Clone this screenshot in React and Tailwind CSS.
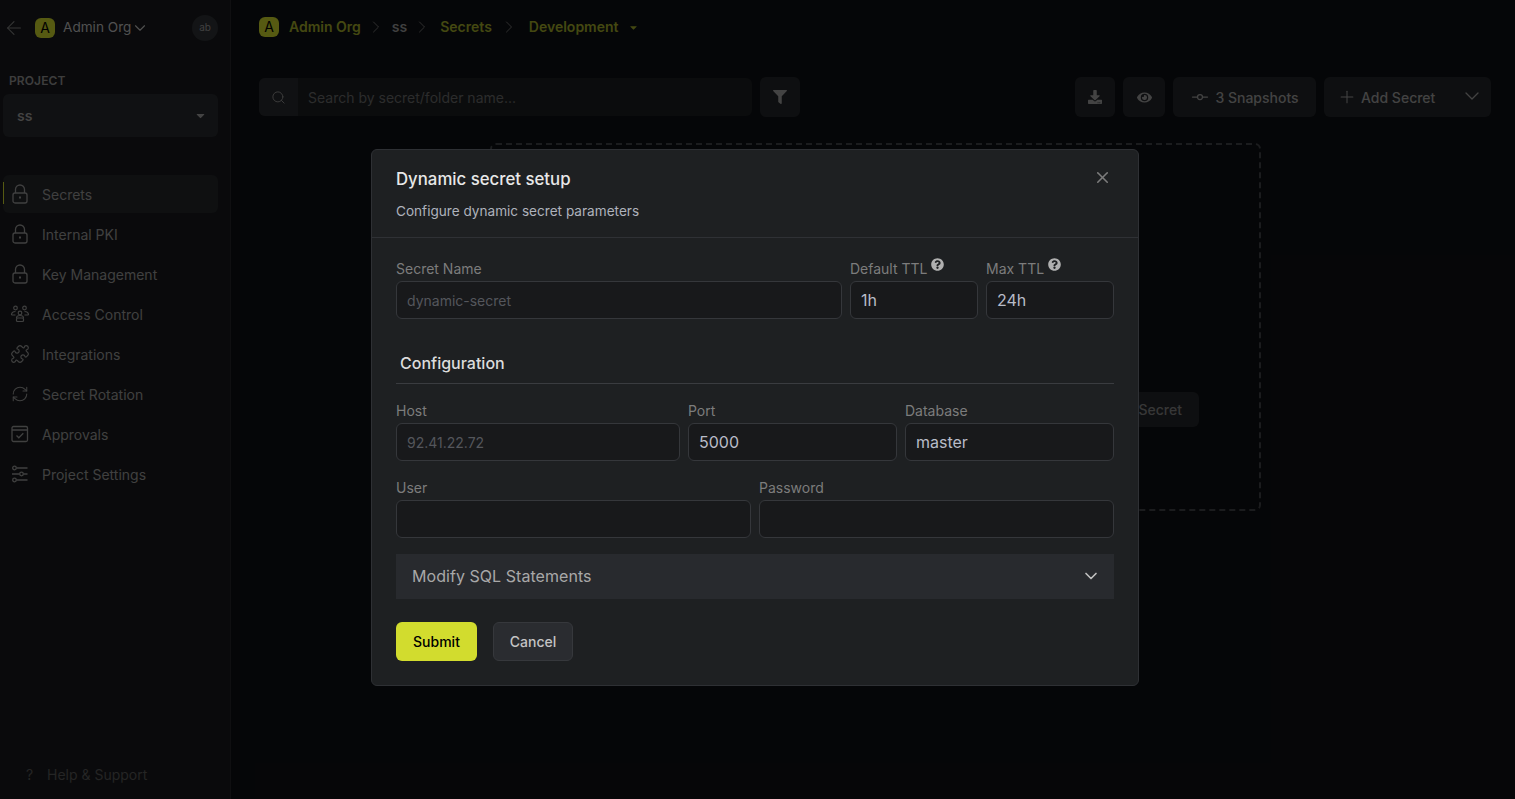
import { ArrowLeft, ChevronDown, ChevronRight, GitCommitHorizontal, Plus, Puzzle, RefreshCw, Search, X } from 'lucide-react'
import { FaCaretDown, FaDownload, FaEye, FaFilter, FaQuestionCircle } from 'react-icons/fa'

function LockIcon() {
  return (
    <svg width="16" height="20" viewBox="0 0 16 20" fill="none" stroke="currentColor" strokeWidth="1.3">
      <path d="M3.500 9V5.500a4.500 4.500 0 0 1 9 0V9" />
      <rect x="1" y="9" width="14" height="10" rx="2" />
      <path d="M8 12.500v2" strokeWidth="2" />
    </svg>
  )
}

function AccessIcon() {
  return (
    <svg width="20" height="20" viewBox="0 0 20 20" fill="none" stroke="currentColor" strokeWidth="1.2">
      <circle cx="5.500" cy="4" r="1.800" />
      <circle cx="14.500" cy="4" r="1.800" />
      <circle cx="10" cy="9" r="1.800" />
      <path d="M1.500 11c0-2.500 1.500-3.500 4-3.500M18.500 11c0-2.500-1.500-3.500-4-3.500" />
      <path d="M1.500 11h4M14.500 11h4" />
      <path d="M6.500 14c0-1.500 1.500-2.500 3.500-2.500s3.500 1 3.500 2.500" />
      <rect x="6.500" y="14" width="7" height="3.500" rx="1" />
    </svg>
  )
}

function ApprovalIcon() {
  return (
    <svg width="18" height="18" viewBox="0 0 18 18" fill="none" stroke="currentColor" strokeWidth="1.3">
      <rect x="1" y="1.500" width="15.500" height="15" rx="1.500" />
      <path d="M1 5h15.500M5.500 10.500l2.300 2.300 4.500-4.500" />
    </svg>
  )
}

function SlidersIcon() {
  return (
    <svg width="18" height="18" viewBox="0 0 18 18" fill="none" stroke="currentColor" strokeWidth="1.3">
      <circle cx="3.500" cy="3" r="1.800" />
      <circle cx="10.500" cy="9" r="1.800" />
      <circle cx="3.500" cy="15" r="1.800" />
      <path d="M5.500 3h11M1 9h7.500M12.500 9h4M5.500 15h11" />
    </svg>
  )
}

const navItems = [
  { label: 'Secrets', icon: <LockIcon />, active: true },
  { label: 'Internal PKI', icon: <LockIcon /> },
  { label: 'Key Management', icon: <LockIcon /> },
  { label: 'Access Control', icon: <AccessIcon /> },
  { label: 'Integrations', icon: <Puzzle size={20} strokeWidth={1.4} /> },
  { label: 'Secret Rotation', icon: <RefreshCw size={18} strokeWidth={1.4} /> },
  { label: 'Approvals', icon: <ApprovalIcon /> },
  { label: 'Project Settings', icon: <SlidersIcon /> },
]

function Sidebar() {
  return (
    <aside className="flex h-full w-[231px] shrink-0 flex-col border-r border-[#26272b] bg-[#1a1b1e] pl-[3px] pr-3">
      <div className="flex h-14 items-center pb-[1px]">
        <ArrowLeft size={22} strokeWidth={1.1} className="text-[#8a8a8a]" />
        <span className="ml-[10px] flex h-5 w-5 items-center justify-center rounded-md bg-[#d6e02e] text-sm text-black">A</span>
        <span className="ml-2 text-[13.6px] text-[#c8c8c8]">Admin Org</span>
        <ChevronDown size={18} strokeWidth={1.5} className="text-[#c8c8c8]" />
        <span className="ml-auto flex h-[26px] w-[26px] items-center justify-center rounded-full bg-[#313338] text-[10px] text-[#a0a0a0]">ab</span>
      </div>
      <p className="ml-[6px] mt-4 text-xs font-semibold leading-[18px] tracking-[0.1px] text-[#9a9a9a]">PROJECT</p>
      <div className="mt-1 flex h-[43px] items-center justify-between rounded-md bg-[#2a2c30] pl-[14px] pr-[11px] text-sm font-semibold text-[#a8a8a8]">
        ss
        <FaCaretDown size={13} className="text-[#a8a8a8]" />
      </div>
      <nav className="mt-[38px] flex flex-col gap-[2px]">
        {navItems.map((item) => (
          <div
            key={item.label}
            className={`relative flex h-[38px] items-center rounded-md pl-[9px] text-sm text-[#a0a0a0] ${item.active ? 'bg-[#26282c]' : ''}`}
          >
            {item.active && <span className="absolute left-0 top-[7px] h-[22px] w-px bg-[#d6e02e]" />}
            <span className="flex w-4 justify-center [&>svg]:shrink-0">{item.icon}</span>
            <span className="ml-[14px] pt-[2px]">{item.label}</span>
          </div>
        ))}
      </nav>
      <div className="mt-auto mb-[14px] flex items-center pl-[23px] text-sm text-[#5c5c5c]">
        <span className="w-[21px]">?</span>
        Help &amp; Support
      </div>
    </aside>
  )
}

function ToolButton({ className, children }) {
  return (
    <div className={`flex h-10 items-center justify-center rounded-md bg-[#25272b] text-sm font-medium text-[#a8a8a8] ${className}`}>
      {children}
    </div>
  )
}

function Main() {
  return (
    <main className="min-w-0 flex-1 pl-7 pr-6">
      <div className="flex h-[54px] items-center text-sm font-semibold">
        <span className="flex h-5 w-5 items-center justify-center rounded-md bg-[#d6e02e] font-normal text-black">A</span>
        <span className="ml-[10px] text-[#aab52c]">Admin Org</span>
        <ChevronRight size={20} strokeWidth={1} className="ml-[5px] text-[#8a8a8a]" />
        <span className="ml-[6px] text-[#a0a0a0]">ss</span>
        <ChevronRight size={20} strokeWidth={1} className="ml-[5px] text-[#8a8a8a]" />
        <span className="ml-2 text-[#aab52c]">Secrets</span>
        <ChevronRight size={20} strokeWidth={1} className="ml-[7px] text-[#8a8a8a]" />
        <span className="ml-[10px] text-[#aab52c]">Development</span>
        <FaCaretDown size={11} className="ml-[9px] text-[#aab52c]" />
      </div>
      <div className="mt-[23px] flex items-center">
        <div className="flex h-[38px] w-[493px] overflow-hidden rounded-md bg-[#1d1f22] text-sm text-[#6e6e6e]">
          <span className="flex w-[39px] items-center justify-center bg-[#2a2c30]">
            <Search size={15} strokeWidth={1.5} className="text-[#9a9a9a]" />
          </span>
          <span className="flex items-center pl-[10px] pt-[2px]">Search by secret/folder name...</span>
        </div>
        <ToolButton className="ml-2 w-10">
          <FaFilter size={14} />
        </ToolButton>
        <div className="ml-auto flex gap-2">
          <ToolButton className="w-10">
            <FaDownload size={14} />
          </ToolButton>
          <ToolButton className="w-[42px]">
            <FaEye size={15} />
          </ToolButton>
          <ToolButton className="w-[143px] gap-[5px]">
            <GitCommitHorizontal size={20} strokeWidth={1.5} />
            <span className="pt-[2px]">3 Snapshots</span>
          </ToolButton>
          <ToolButton className="w-[167px] !justify-start pl-[13px]">
            <Plus size={20} strokeWidth={1.25} />
            <span className="ml-1 pt-[2px]">Add Secret</span>
            <ChevronDown size={24} strokeWidth={1.25} className="mb-[2px] ml-[25px]" />
          </ToolButton>
        </div>
      </div>
      <div className="ml-[231px] mt-[26px] flex h-[368px] w-[771px] items-end justify-end rounded-md border-2 border-dashed border-[#45474b] pb-[82px] pr-[60px]">
        <div className="flex h-[35px] w-[120px] items-center justify-end rounded-md bg-[#25272b] pr-[17px] text-sm font-medium text-[#8a8a8a]">
          Secret
        </div>
      </div>
    </main>
  )
}

function Field({ label, hint, placeholder, value }) {
  return (
    <div className="min-w-0">
      <label className="flex h-5 items-center text-sm leading-5 text-[#7c7c7c]">
        {label}
        {hint && <FaQuestionCircle size={13} className="mb-[10px] ml-1 text-[#b0b0b0]" />}
      </label>
      <div className="mt-[2px] flex h-[38px] items-center rounded-md border border-[#35373b] bg-[#18191b] px-[10px]">
        {value ? (
          <span className="text-base text-[#b8bcc8]">{value}</span>
        ) : (
          <span className="pt-[2px] text-sm text-[#54565c]">{placeholder}</span>
        )}
      </div>
    </div>
  )
}

function SetupModal() {
  return (
    <div className="absolute inset-0 flex justify-center bg-black/60 pr-[5px] pt-[149px]">
      <div className="h-[537px] w-[768px] rounded-md border border-[#2e3034] bg-[#1e2022]">
        <div className="relative h-[88px] border-b border-[#2f3135] px-6 pt-[15px]">
          <h2 className="text-[16.8px] font-medium leading-7 text-[#e8e8e8]">Dynamic secret setup</h2>
          <p className="mt-2 text-[13.6px] leading-5 text-[#aeb2bc]">Configure dynamic secret parameters</p>
          <X size={19} strokeWidth={2} className="absolute right-[26px] top-[18px] text-[#7c7c7c]" />
        </div>
        <div className="px-6 pt-[21px]">
          <div className="grid grid-cols-[1fr_128px_128px] gap-2">
            <Field label="Secret Name" placeholder="dynamic-secret" />
            <Field label="Default TTL" hint value="1h" />
            <Field label="Max TTL" hint value="24h" />
          </div>
          <div className="mt-8 border-b border-[#3a3c40] pb-2 pl-1 text-base font-medium leading-6 text-[#dcdcdc]">
            Configuration
          </div>
          <div className="mt-[17px] grid grid-cols-[284px_1fr_1fr] gap-2">
            <Field label="Host" placeholder="92.41.22.72" />
            <Field label="Port" value="5000" />
            <Field label="Database" value="master" />
          </div>
          <div className="mt-[17px] grid grid-cols-2 gap-2">
            <Field label="User" />
            <Field label="Password" />
          </div>
          <div className="mt-4 flex h-[45px] items-center justify-between bg-[#282a2e] pb-[1px] pl-4 pr-[13px] text-base tracking-[0.05px] text-[#a8a8a8]">
            Modify SQL Statements
            <ChevronDown size={20} strokeWidth={2} className="text-[#c0c0c0]" />
          </div>
          <div className="mt-[23px] flex gap-4">
            <button type="button" className="h-[39px] w-[81px] rounded-md bg-[#d2dc2e] text-sm font-medium text-black">
              Submit
            </button>
            <button type="button" className="h-[39px] w-[80px] rounded-md border border-[#36383c] bg-[#2a2c30] text-sm font-medium text-[#c4c4c4]">
              Cancel
            </button>
          </div>
        </div>
      </div>
    </div>
  )
}

export default function App() {
  return (
    <div className="relative flex h-[799px] w-[1515px] overflow-hidden bg-[#0e1014] font-['Inter',sans-serif]">
      <Sidebar />
      <Main />
      <SetupModal />
    </div>
  )
}
